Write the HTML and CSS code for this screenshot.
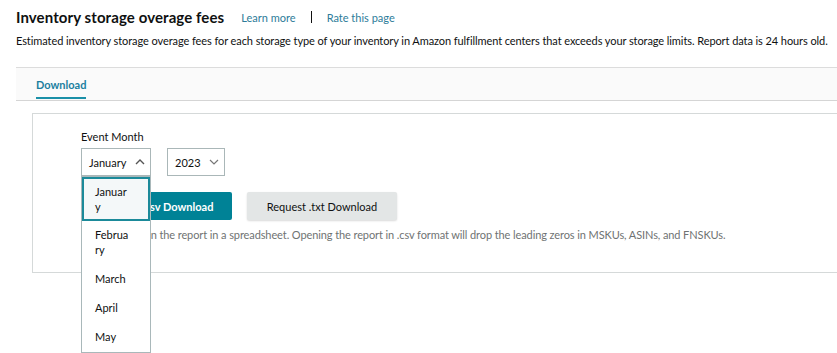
FILE: index.html
```html
<!DOCTYPE html>
<html>
<head>
<meta charset="utf-8">
<link rel="stylesheet" href="styles.css">
</head>
<body>
<div class="page">
  <header class="head">
    <h1 class="title">Inventory storage overage fees</h1>
    <a class="link">Learn more</a>
    <span class="sep"></span>
    <a class="link">Rate this page</a>
  </header>
  <p class="desc">Estimated inventory storage overage fees for each storage type of your inventory in Amazon fulfillment centers that exceeds your storage limits. Report data is 24 hours old.</p>
  <nav class="tabs">
    <span class="tab">Download</span>
  </nav>
  <section class="card">
    <div class="field">
      <label class="label">Event Month</label>
      <div class="selects">
        <div class="select-wrap">
          <div class="select month">
            <span>January</span>
            <svg class="chev" width="10" height="6" viewBox="0 0 10 6"><path d="M1 5 L5 1 L9 5" fill="none" stroke="#555" stroke-width="1.4"/></svg>
          </div>
          <ul class="menu">
            <li class="opt active">January</li>
            <li class="opt">February</li>
            <li class="opt">March</li>
            <li class="opt">April</li>
            <li class="opt">May</li>
          </ul>
        </div>
        <div class="select year">
          <span>2023</span>
          <svg class="chev" width="10" height="6" viewBox="0 0 10 6"><path d="M1 1 L5 5 L9 1" fill="none" stroke="#777" stroke-width="1.2"/></svg>
        </div>
      </div>
    </div>
    <div class="buttons">
      <button class="btn primary">Request .csv Download</button>
      <button class="btn secondary">Request .txt Download</button>
    </div>
    <p class="note">Use .txt to open the report in a spreadsheet. Opening the report in .csv format will drop the leading zeros in MSKUs, ASINs, and FNSKUs.</p>
  </section>
</div>
</body>
</html>
```
FILE: styles.css
```css
html {
  background: #fff;
}
body {
  margin: 0;
  padding: 0;
  min-height: 353px;
  font-family: "Lato", "Noto Sans", sans-serif;
  color: #0f1111;
}
.page {
  padding-left: 16px;
  overflow-x: clip;
}
.head {
  display: flex;
  align-items: center;
  height: 34px;
}
.title {
  margin: 0;
  font-size: 15px;
  font-weight: 700;
  letter-spacing: 0.1px;
  margin-right: 17px;
}
.link {
  font-size: 11px;
  color: #2d7c99;
  text-decoration: none;
}
.sep {
  width: 1px;
  height: 12px;
  background: #111;
  margin: 0 15px 0 15px;
}
.desc {
  margin: 0;
  font-size: 11px;
  line-height: 14px;
  letter-spacing: -0.08px;
  white-space: nowrap;
  color: #0f1111;
}
.tabs {
  margin-top: 19px;
  height: 32px;
  width: 860px;
  background: #fafafa;
  border-top: 1px solid #dcdcdc;
  border-bottom: 1px solid #d5d5d5;
  padding-left: 20px;
  display: flex;
  align-items: flex-end;
}
.tab {
  font-size: 11px;
  font-weight: 700;
  color: #1b7fa0;
  padding-bottom: 5px;
  border-bottom: 2px solid #1a90a8;
  line-height: 14px;
  margin-bottom: 1px;
}
.card {
  margin: 12px 0 0 16px;
  width: 860px;
  border: 1px solid #d5d9d9;
  height: 160px;
  box-sizing: border-box;
  padding: 16px 0 0 48px;
}
.label {
  display: block;
  font-size: 11px;
  line-height: 14px;
  color: #0f1111;
}
.selects {
  display: flex;
  gap: 16px;
  margin-top: 4px;
}
.select-wrap {
  position: relative;
}
.select {
  box-sizing: border-box;
  height: 28px;
  border: 1px solid #aab7b8;
  display: flex;
  align-items: center;
  justify-content: space-between;
  padding: 0 5px 0 7px;
  font-size: 11px;
  color: #0f1111;
  background: #fff;
}
.month { width: 70px; }
.year { width: 58px; }
.chev { display: block; }
.menu {
  position: absolute;
  top: 28px;
  left: 0;
  width: 70px;
  box-sizing: border-box;
  margin: 0;
  padding: 0;
  list-style: none;
  border: 1px solid #a9b8ba;
  background: #fff;
  z-index: 2;
}
.opt {
  font-size: 11px;
  line-height: 15px;
  padding: 6px 21px 8px 13px;
  word-break: break-all;
  color: #0f1111;
}
.opt.active {
  border: 2px solid #1b8a9a;
  background: #f4f8f9;
  padding: 5px 19px 5px 11px;
}
.buttons {
  display: flex;
  gap: 15px;
  margin-top: 16px;
}
.btn {
  font-family: inherit;
  font-size: 11px;
  height: 28px;
  border: none;
  border-radius: 2px;
  padding: 0;
}
.primary {
  width: 151px;
  background: #008296;
  color: #fff;
  font-weight: 700;
}
.secondary {
  width: 150px;
  background: #e3e6e6;
  color: #0f1111;
  box-shadow: 0 1px 2px rgba(0,0,0,0.15);
}
.note {
  margin: 8px 0 0;
  font-size: 11px;
  line-height: 14px;
  letter-spacing: -0.1px;
  color: #6f7373;
}
```
